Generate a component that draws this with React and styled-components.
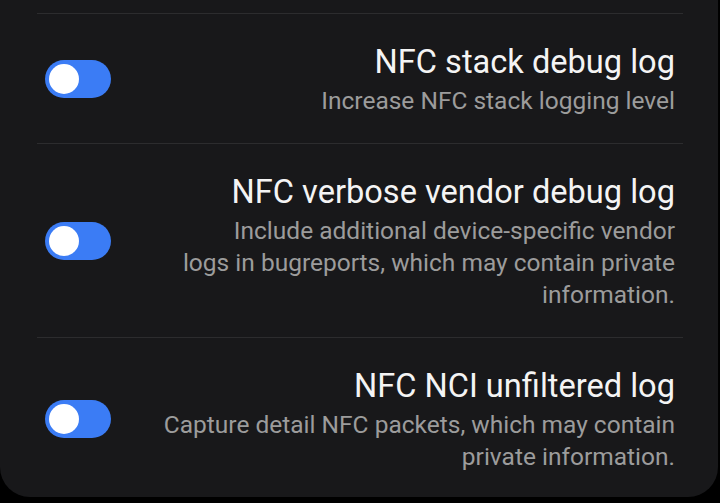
import React from "react";
import styled, { createGlobalStyle } from "styled-components";

const GlobalStyle = createGlobalStyle`
  html, body {
    margin: 0;
    padding: 0;
    background: #000;
  }
  body {
    font-family: Roboto, "Noto Sans", sans-serif;
  }
`;

const Screen = styled.div`
  width: 720px;
  height: 503px;
  background: #000;
  overflow: hidden;
`;

const Card = styled.div`
  width: 718px;
  height: 497px;
  background: #18181a;
  border-radius: 0 0 30px 30px;
  padding-top: 13px;
  box-sizing: border-box;
`;

const Divider = styled.div`
  height: 1px;
  margin: 0 35px 0 37px;
  background: #2c2c2e;
`;

const Row = styled.div`
  display: flex;
  align-items: center;
  padding: 28px 43px 26px 45px;
`;

const Switch = styled.div`
  position: relative;
  flex: none;
  width: 66px;
  height: 38px;
  margin-top: -2px;
  border-radius: 19px;
  background: #3b7cf5;
`;

const Thumb = styled.div`
  position: absolute;
  left: 4px;
  top: 4px;
  width: 30px;
  height: 30px;
  border-radius: 50%;
  background: #fff;
`;

const Text = styled.div`
  flex: 1;
  text-align: right;
`;

const Title = styled.div`
  font-size: 32.6px;
  line-height: 40px;
  color: #f4f4f4;
`;

const Summary = styled.div`
  margin-top: 3px;
  font-size: 24.5px;
  line-height: 32px;
  color: #9c9c9c;
  white-space: pre-line;
`;

const items = [
  {
    title: "NFC stack debug log",
    summary: "Increase NFC stack logging level",
  },
  {
    title: "NFC verbose vendor debug log",
    summary:
      "Include additional device-specific vendor\nlogs in bugreports, which may contain private\ninformation.",
  },
  {
    title: "NFC NCI unfiltered log",
    summary: "Capture detail NFC packets, which may contain\nprivate information.",
  },
];

const App = () => {
  return (
    <Screen>
      <GlobalStyle />
      <Card>
        {items.map((item) => (
          <React.Fragment key={item.title}>
            <Divider />
            <Row>
              <Switch>
                <Thumb />
              </Switch>
              <Text>
                <Title>{item.title}</Title>
                <Summary>{item.summary}</Summary>
              </Text>
            </Row>
          </React.Fragment>
        ))}
      </Card>
    </Screen>
  );
};

export default App;
